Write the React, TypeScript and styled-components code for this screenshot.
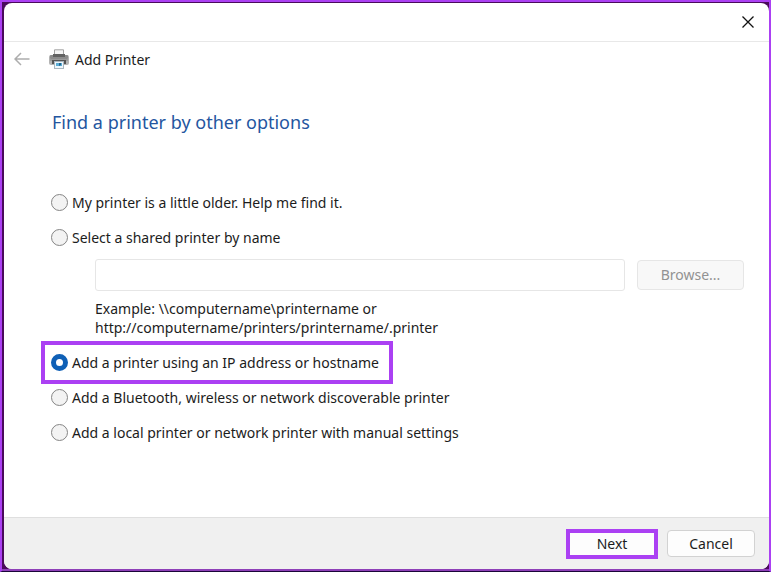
import React, { useState } from 'react';
import styled, { createGlobalStyle } from 'styled-components';

const PURPLE = '#ab40f3';

const GlobalStyle = createGlobalStyle`
  *, *::before, *::after { box-sizing: border-box; }
  body {
    margin: 0;
    color: #1c1c1c;
    font: 14px/19px "Noto Sans", "Open Sans", sans-serif;
  }
  button, input { font: inherit; color: inherit; }
`;

const Desktop = styled.div`
  display: flex;
  min-height: 100vh;
  padding: 1px 0 2px 2px;
  background: linear-gradient(#8e3fb8, #8e3fb8) bottom / 100% 2px no-repeat #4a0a5c;
  border: 2px solid ${PURPLE};
  border-bottom: 1px solid #1a0638;
`;

const Dialog = styled.main`
  flex: 1;
  display: flex;
  flex-direction: column;
  overflow: hidden;
  background: #fff;
  border-radius: 8px;
`;

const TitleBar = styled.header`
  display: flex;
  justify-content: flex-end;
  align-items: center;
  height: 39px;
  padding: 0 7px;
  border-bottom: 1px solid #e8e8e8;
`;

const IconButton = styled.button`
  display: grid;
  place-items: center;
  padding: 0;
  width: 28px;
  height: 28px;
  border: 0;
  background: none;
`;

const NavBar = styled.div`
  display: flex;
  align-items: center;
  height: 34px;
  padding-left: 4px;
`;

const AppTitle = styled.div`
  display: flex;
  align-items: center;
  gap: 6px;
  margin-left: 13px;
`;

const Content = styled.form`
  flex: 1;
  padding: 32px 25px 64px 41px;
`;

const Heading = styled.h1`
  margin: 0 7px 49px;
  color: #24569f;
  font-size: 18px;
  line-height: 28px;
  font-weight: 400;
`;

const Option = styled.label<{ $marked?: boolean }>`
  display: flex;
  align-items: center;
  gap: 4px;
  width: fit-content;
  height: 35px;
  padding: 0 10px 0 6px;
  outline: ${(p) => (p.$marked ? `4px solid ${PURPLE}` : 'none')};
`;

const Radio = styled.input`
  appearance: none;
  flex: none;
  width: 17px;
  height: 17px;
  margin: 0;
  border: 1px solid #858585;
  border-radius: 50%;
  background: #f3f3f3;

  &:checked {
    border: 5px solid #0f60b6;
    background: #fff;
  }
`;

const SharedPrinter = styled.div`
  display: flex;
  align-items: center;
  gap: 12px;
  margin: 4px 0 8px 50px;
`;

const PathInput = styled.input`
  flex: 1;
  min-width: 0;
  height: 32px;
  padding: 0 8px;
  border: 1px solid #e6e6e6;
  border-radius: 3px;
  background: #fff;
`;

const Example = styled.p`
  margin: 0 0 8px 50px;
`;

const Button = styled.button<{ $marked?: boolean }>`
  min-width: 88px;
  height: 27px;
  padding: 0;
  border: 1px solid #d2d2d2;
  border-radius: 4px;
  background: #fdfdfd;

  ${(p) => p.$marked && `
    min-width: 92px;
    height: 30px;
    border: 4px solid ${PURPLE};
    border-radius: 0;
  `}
`;

const BrowseButton = styled(Button)`
  min-width: 107px;
  height: 30px;
  padding-bottom: 2px;
  border-color: #e6e6e6;
  background: #f8f8f8;
  color: #929292;
`;

const Footer = styled.footer`
  display: flex;
  justify-content: flex-end;
  align-items: center;
  gap: 9px;
  height: 52px;
  padding: 0 14px;
  border-top: 1px solid #dfdfdf;
  background: #f0f0f0;
`;

const PrinterIcon = () => (
  <svg width="20" height="20" viewBox="0 0 20 20" aria-hidden="true">
    <path d="M5.5 7V.8h9V7" fill="#f5f5f5" stroke="#a3a3a3" />
    <rect x="0" y="6" width="20" height="10" rx="2" fill="#b3b3b3" />
    <rect x="1" y="6" width="18" height="4" rx="1" fill="#8c8c8c" />
    <rect x="4" y="5" width="12" height="3" fill="#626262" />
    <rect x="1" y="10" width="18" height="2" fill="#9c9c9c" />
    <rect x="3" y="11" width="14" height="4" fill="#545454" />
    <rect x="5.5" y="12.5" width="9" height="7" fill="#eef6fb" stroke="#a9b6bf" />
    <path d="M7 14h6v3H7z" fill="#5badd6" />
    <path d="M10 14h2v2l-2 1z" fill="#24658c" />
  </svg>
);

const App: React.FC = () => {
  const [choice, setChoice] = useState('ip');

  const option = (value: string, text: string, marked = false) => (
    <Option $marked={marked}>
      <Radio
        type="radio"
        name="method"
        value={value}
        checked={choice === value}
        onChange={() => setChoice(value)}
      />
      {text}
    </Option>
  );

  return (
    <>
      <GlobalStyle />
      <Desktop>
        <Dialog>
          <TitleBar>
            <IconButton type="button" aria-label="Close">
              <svg width="12" height="12" viewBox="0 0 12 12" aria-hidden="true">
                <path d="M.5.5l11 11M11.5.5l-11 11" stroke="#111" strokeWidth="1.3" />
              </svg>
            </IconButton>
          </TitleBar>
          <NavBar>
            <IconButton type="button" aria-label="Back">
              <svg width="16" height="14" viewBox="0 0 16 14" fill="none" aria-hidden="true">
                <path d="M7 1L1 7l6 6M1 7h14.5" stroke="#adadad" strokeWidth="1.5" />
              </svg>
            </IconButton>
            <AppTitle>
              <PrinterIcon />
              Add Printer
            </AppTitle>
          </NavBar>
          <Content id="add-printer" onSubmit={(e) => e.preventDefault()}>
            <Heading>Find a printer by other options</Heading>
            {option('older', 'My printer is a little older. Help me find it.')}
            {option('shared', 'Select a shared printer by name')}
            <SharedPrinter>
              <PathInput type="text" aria-label="Shared printer name" disabled={choice !== 'shared'} />
              <BrowseButton type="button" disabled={choice !== 'shared'}>Browse...</BrowseButton>
            </SharedPrinter>
            <Example>
              Example: \\computername\printername or
              <br />
              http://computername/printers/printername/.printer
            </Example>
            {option('ip', 'Add a printer using an IP address or hostname', true)}
            {option('bluetooth', 'Add a Bluetooth, wireless or network discoverable printer')}
            {option('local', 'Add a local printer or network printer with manual settings')}
          </Content>
          <Footer>
            <Button type="submit" form="add-printer" $marked>Next</Button>
            <Button type="button">Cancel</Button>
          </Footer>
        </Dialog>
      </Desktop>
    </>
  );
};

export default App;
